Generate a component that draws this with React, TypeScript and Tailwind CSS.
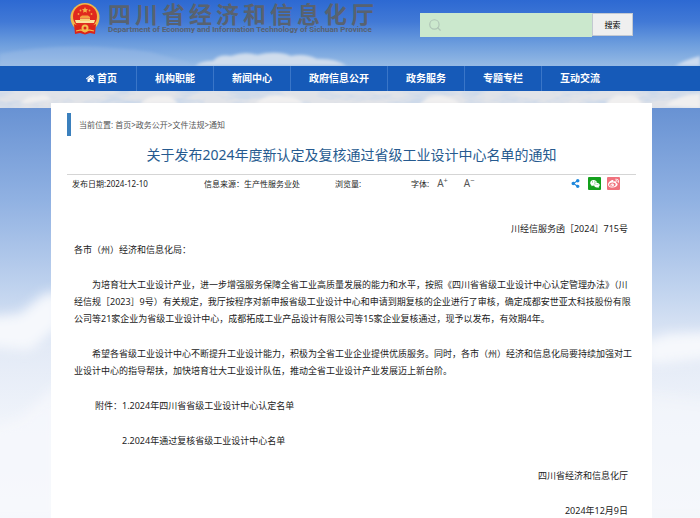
import { FaHome, FaShareAlt, FaWeibo, FaWeixin } from "react-icons/fa";
import { Search } from "lucide-react";

const NAV = ["机构职能", "新闻中心", "政府信息公开", "政务服务", "专题专栏", "互动交流"];
const CRUMBS = ["首页", "政务公开", "文件法规", "通知"];

function Emblem() {
  return (
    <svg viewBox="0 0 30 32" className="h-8 w-[30px] shrink-0" aria-hidden="true">
      <circle cx="15" cy="14.5" r="14.5" fill="#f0b94a" />
      <circle cx="15" cy="13.5" r="12" fill="#e02a1e" />
      <path d="M15 4l.9 1.900 2.100.300-1.500 1.500.400 2.100-1.900-1-1.900 1 .400-2.100-1.500-1.500 2.100-.300z" fill="#f6b04a" />
      <g fill="#f3a243">
        <circle cx="8.500" cy="11" r="0.9" />
        <circle cx="10.500" cy="7.500" r="0.9" />
        <circle cx="19.500" cy="7.500" r="0.9" />
        <circle cx="21.500" cy="11" r="0.9" />
        <path d="M10 14l2-1.500h6l2 1.500v1H10z" />
      </g>
      <path d="M5 17h20l-1 3H6z" fill="#fbe3a0" />
      <path d="M10 15.500h10V18H10z" fill="#f8d276" />
      <path d="M4 21c3 2 6 1 8 3h6c2-2 5-1 8-3l-1 10-5-1-5 1.500L10 30l-5 1z" fill="#dc2419" />
      <circle cx="15" cy="25" r="3.500" fill="#f3bd4e" />
      <circle cx="15" cy="25" r="1.500" fill="#dc2419" />
      <path d="M6 28l5-1 4 2 4-2 5 1" fill="none" stroke="#f3bd4e" strokeWidth="1.200" />
    </svg>
  );
}

// Sky photo behind the header: blue fading down into a band of clouds
function HeaderSky() {
  return (
    <svg
      viewBox="0 0 700 108"
      preserveAspectRatio="none"
      className="absolute inset-0 -z-10 h-full w-full"
      aria-hidden="true"
    >
      <defs>
        <linearGradient id="sky" x1="0" y1="0" x2="0" y2="1">
          <stop offset="0" stopColor="#2d69d2" />
          <stop offset="0.2" stopColor="#4179d6" />
          <stop offset="0.4" stopColor="#6b9cdd" />
          <stop offset="0.6" stopColor="#94b9e4" />
          <stop offset="1" stopColor="#c3d3e6" />
        </linearGradient>
        <filter id="soft" x="-10%" y="-50%" width="120%" height="200%">
          <feGaussianBlur stdDeviation="1.500" />
        </filter>
        <filter id="puff" x="0" y="0" width="100%" height="100%">
          <feTurbulence type="fractalNoise" baseFrequency="0.03 0.080" numOctaves="4" seed="8" />
          <feColorMatrix values="0 0 0 0 0.62  0 0 0 0 0.7  0 0 0 0 0.82  3 0 0 0 -1.200" />
        </filter>
      </defs>
      <rect width="700" height="108" fill="url(#sky)" />
      <g filter="url(#soft)">
        <path d="M0 54q70-14 150-2l50 14H0z" fill="#a7c3e8" opacity="0.35" />
        <path d="M195 66q6-5 18-5 6-7 18-5 14-5 26-1 20-5 34 1 14-3 26 3 18-1 30 7z" fill="#d0dded" />
        <path d="M675 66q10-6 25-10v10z" fill="#cddcf0" />
      </g>
      <rect y="90" width="700" height="18" fill="#e1e3e8" />
      <rect y="90" width="700" height="18" filter="url(#puff)" />
      <g filter="url(#soft)" fill="#f0efef">
        <path d="M20 104q8-10 18-8 8-4 14 4zM140 104q10-10 22-8 10-2 16 8zM255 104q12-12 30-8 12 0 20 8zM420 104q12-12 26-7 10 2 14 7zM605 106q8-14 20-10 12-4 18 10zM665 106q14-12 35-12v14z" />
      </g>
    </svg>
  );
}

// Lower page backdrop, only visible in the margins beside the article
function PageSky() {
  return (
    <svg
      viewBox="0 0 700 410"
      preserveAspectRatio="none"
      className="absolute inset-0 -z-10 h-full w-full"
      aria-hidden="true"
    >
      <defs>
        <linearGradient id="low" x1="0" y1="0" x2="0" y2="1">
          <stop offset="0" stopColor="#6892d3" />
          <stop offset="0.22" stopColor="#90b1e2" />
          <stop offset="0.45" stopColor="#c3d5ef" />
          <stop offset="0.58" stopColor="#e3eaf6" />
          <stop offset="0.75" stopColor="#eff3fa" />
          <stop offset="1" stopColor="#f5f8fc" />
        </linearGradient>
        <filter id="haze" x="-50%" y="-20%" width="200%" height="140%">
          <feGaussianBlur stdDeviation="6" />
        </filter>
      </defs>
      <rect width="700" height="410" fill="url(#low)" />
      <g fill="#f6f8fc" filter="url(#haze)">
        <path d="M-20 208L20 204 44 184 60 182V216L30 240-20 236z" />
        <path d="M-20 318L20 306 60 270V410H-20z" opacity="0.7" />
        <path d="M640 234L668 224 720 222V246L650 254z" />
        <path d="M640 280L720 290V410H640z" opacity="0.5" />
      </g>
    </svg>
  );
}

function Header() {
  return (
    <header className="relative isolate h-[108px]">
      <HeaderSky />
      <div className="flex h-[66px] items-start pr-[67px] pl-[70px]">
        <div className="flex flex-1 items-start gap-2 pt-[3px]">
          <Emblem />
          <div className="text-[#586270]">
            <h1 className="text-[23px] leading-[23px] font-bold tracking-[4px] whitespace-nowrap">
              四川省经济和信息化厅
            </h1>
            <p className="font-[Roboto,sans-serif] text-[8px] leading-2 font-bold whitespace-nowrap">
              Department of Economy and Information Technology of Sichuan Province
            </p>
          </div>
        </div>
        <form className="mt-[13px] flex" onSubmit={(e) => e.preventDefault()}>
          <label className="flex h-6 w-[172px] items-center bg-[#cbe8cd] pl-2">
            <Search className="size-[14px] shrink-0 text-[#afc4b6]" strokeWidth={2} />
            <input type="search" aria-label="搜索内容" className="w-full min-w-0 px-1 text-[9px] outline-none" />
          </label>
          <button type="submit" className="h-[23px] w-[41px] border border-[#c3c9d2] bg-[#efefef] text-[8px] text-black">
            搜索
          </button>
        </form>
      </div>
      <nav className="flex h-[25px] bg-[#165ab8] pl-[67px] text-[10px] font-bold text-white">
        <a href="#" className="flex items-center gap-0.5 px-[19px]">
          <FaHome className="size-[9px]" />
          首页
        </a>
        {NAV.map((item) => (
          <a key={item} href="#" className="flex items-center border-l border-[#3a76c8] px-[18px]">
            {item}
          </a>
        ))}
      </nav>
    </header>
  );
}

function ArticleMeta() {
  return (
    <div className="mx-4 flex h-[18px] items-center border-t border-[#d5d5d5] pl-[5px] text-[8px] text-[#222]">
      <span className="w-[132px]">发布日期:2024-12-10</span>
      <span className="w-[131px]">信息来源：生产性服务业处</span>
      <span className="w-[76px]">浏览量:</span>
      <span>字体:</span>
      <button type="button" aria-label="放大字体" className="ml-2 text-[10px] text-[#555]">
        A<sup>+</sup>
      </button>
      <button type="button" aria-label="缩小字体" className="ml-4 text-[10px] text-[#555]">
        A<sup>−</sup>
      </button>
      <div className="mr-4 ml-auto flex items-center gap-1.5">
        <button type="button" aria-label="分享" className="grid size-[13px] place-items-center text-[#1d87dc]">
          <FaShareAlt className="size-[9px]" />
        </button>
        <button
          type="button"
          aria-label="分享到微信"
          className="grid size-[13px] place-items-center rounded-[1px] bg-[#14a01c] text-white"
        >
          <FaWeixin className="size-[10px]" />
        </button>
        <button
          type="button"
          aria-label="分享到微博"
          className="grid size-[13px] place-items-center rounded-[1px] bg-[#f0727d] text-white"
        >
          <FaWeibo className="size-[11px]" />
        </button>
      </div>
    </div>
  );
}

export default function App() {
  return (
    <div className="font-['Noto_Sans','Noto_Sans_CJK_SC',sans-serif]" lang="zh-CN">
      <Header />
      <div className="relative isolate flow-root">
        <PageSky />
        <main className="-mt-[5px] mr-12 ml-[51px] bg-white pb-[3px]">
          <div className="flex items-center gap-2 pt-[10px] pl-4 text-[8px] text-[#555]">
            <span className="h-[23px] w-1 bg-[#3b80bd]" />
            <nav>
              当前位置:{" "}
              {CRUMBS.map((c, i) => (
                <span key={c}>
                  {i > 0 && ">"}
                  <a href="#">{c}</a>
                </span>
              ))}
            </nav>
          </div>
          <h2 className="mt-[9px] mb-[9px] text-center text-[14px] leading-5 text-[#265a8f]">
            关于发布2024年度新认定及复核通过省级工业设计中心名单的通知
          </h2>
          <ArticleMeta />
          <article className="mt-7 pr-5 pl-[23px] text-[9px] leading-[17px] text-[#222]">
            <p className="pr-1 text-right">川经信服务函［2024］715号</p>
            <div className="mt-1 flex flex-col gap-[18px]">
              <p>各市（州）经济和信息化局：</p>
              <p className="indent-[18px]">
                为培育壮大工业设计产业，进一步增强服务保障全省工业高质量发展的能力和水平，按照《四川省省级工业设计中心认定管理办法》（川经信规［2023］9号）有关规定，我厅按程序对新申报省级工业设计中心和申请到期复核的企业进行了审核，确定成都安世亚太科技股份有限公司等21家企业为省级工业设计中心，成都拓成工业产品设计有限公司等15家企业复核通过，现予以发布，有效期4年。
              </p>
              <p className="indent-[18px]">
                希望各省级工业设计中心不断提升工业设计能力，积极为全省工业企业提供优质服务。同时，各市（州）经济和信息化局要持续加强对工业设计中心的指导帮扶，加快培育壮大工业设计队伍，推动全省工业设计产业发展迈上新台阶。
              </p>
              <p className="pl-[21px]">附件：1.2024年四川省省级工业设计中心认定名单</p>
              <p className="pl-12">2.2024年通过复核省级工业设计中心名单</p>
              <p className="pr-1 text-right">四川省经济和信息化厅</p>
              <p className="pr-1 text-right">2024年12月9日</p>
            </div>
          </article>
        </main>
      </div>
    </div>
  );
}
